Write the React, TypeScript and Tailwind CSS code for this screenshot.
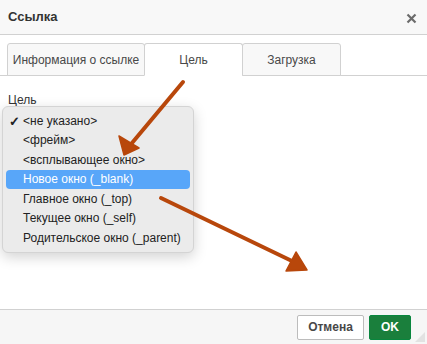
import { useState } from 'react'

const font = { fontFamily: '"Liberation Sans", Arial, sans-serif' }

type Tab = 'info' | 'target' | 'upload'

const tabs: { key: Tab; label: string; w: string }[] = [
  { key: 'info', label: 'Информация о ссылке', w: 'w-[138px]' },
  { key: 'target', label: 'Цель', w: 'w-[99px]' },
  { key: 'upload', label: 'Загрузка', w: 'w-[99px]' },
]

const options = [
  '<не указано>',
  '<фрейм>',
  '<всплывающее окно>',
  'Новое окно (_blank)',
  'Главное окно (_top)',
  'Текущее окно (_self)',
  'Родительское окно (_parent)',
]

function Arrows() {
  return (
    <svg
      className="absolute left-0 top-0 pointer-events-none"
      width="427"
      height="344"
      viewBox="0 0 427 344"
    >
      <g fill="#b8470b" stroke="#b8470b" strokeLinecap="round" strokeLinejoin="round">
        <line x1="183" y1="82" x2="132" y2="143" strokeWidth="4" />
        <polygon points="124,155 119,136 139,148" strokeWidth="1.5" />
        <line x1="161" y1="198" x2="294" y2="262" strokeWidth="4" />
        <polygon points="307,270 286,271 296,252" strokeWidth="1.5" />
      </g>
    </svg>
  )
}

export default function App() {
  const [activeTab, setActiveTab] = useState<Tab>('target')
  const [selected] = useState(0)
  const hovered = 3

  return (
    <div className="relative w-[427px] h-[344px] bg-white overflow-hidden text-[#484848]" style={font}>
      <div className="flex h-full flex-col">
        <div className="flex h-[35px] items-center justify-between border-b border-[#d1d1d1] bg-[#f8f8f8] pl-[8px] pr-[10px]">
          <span className="text-[13px] font-bold text-[#333]">Ссылка</span>
          <svg width="11" height="11" viewBox="0 0 11 11" className="mt-[2px]">
            <path d="M1.5 1.5 L9.5 9.5 M9.5 1.5 L1.5 9.5" stroke="#6b6b6b" strokeWidth="2.2" />
          </svg>
        </div>

        <div className="mt-[8px] flex border-b border-[#d1d1d1] pl-[7px]">
          {tabs.map((tab) => (
            <button
              key={tab.key}
              onClick={() => setActiveTab(tab.key)}
              className={`-mb-px h-[33px] ${tab.w} -ml-px first:ml-0 border border-[#d1d1d1] rounded-t-[3px] text-[12px] text-[#484848] ${
                activeTab === tab.key ? 'bg-white border-b-white' : 'bg-[#f8f8f8]'
              }`}
            >
              {tab.label}
            </button>
          ))}
        </div>

        <div className="flex-1 px-[8px] pt-[15px]">
          <div className="text-[12px] text-[#333]">Цель</div>
        </div>

        <div className="flex h-[35px] items-center justify-end gap-[5px] border-t border-[#d1d1d1] bg-[#f6f6f6] pr-[16px]">
          <button className="h-[25px] w-[67px] rounded-[2px] border border-[#bcbcbc] bg-white text-[12px] font-bold text-[#484848]">
            Отмена
          </button>
          <button className="h-[25px] w-[42px] rounded-[2px] border border-[#09863e] bg-[#1a7f3c] text-[12px] font-bold text-white">
            OK
          </button>
        </div>
      </div>

      <svg className="absolute right-[2px] bottom-[2px]" width="10" height="10" viewBox="0 0 10 10">
        <polygon points="10,0 10,10 0,10" fill="#e2e2e2" />
      </svg>

      <div className="absolute left-[2px] top-[106px] w-[192px] rounded-[6px] border border-[#d4d4d4] bg-[#ebebeb] py-[4px] shadow-[0_4px_14px_rgba(0,0,0,0.18)]">
        {options.map((opt, i) => (
          <div
            key={opt}
            className={`relative mx-[3px] flex h-[19.5px] items-center rounded-[4px] pl-[17px] text-[12px] ${
              i === hovered ? 'bg-[#58a6f9] text-white' : 'text-[#222]'
            }`}
          >
            {i === selected && (
              <span className="absolute left-[3px] top-[1px] text-[13px] font-bold">✓</span>
            )}
            {opt}
          </div>
        ))}
      </div>

      <Arrows />
    </div>
  )
}
